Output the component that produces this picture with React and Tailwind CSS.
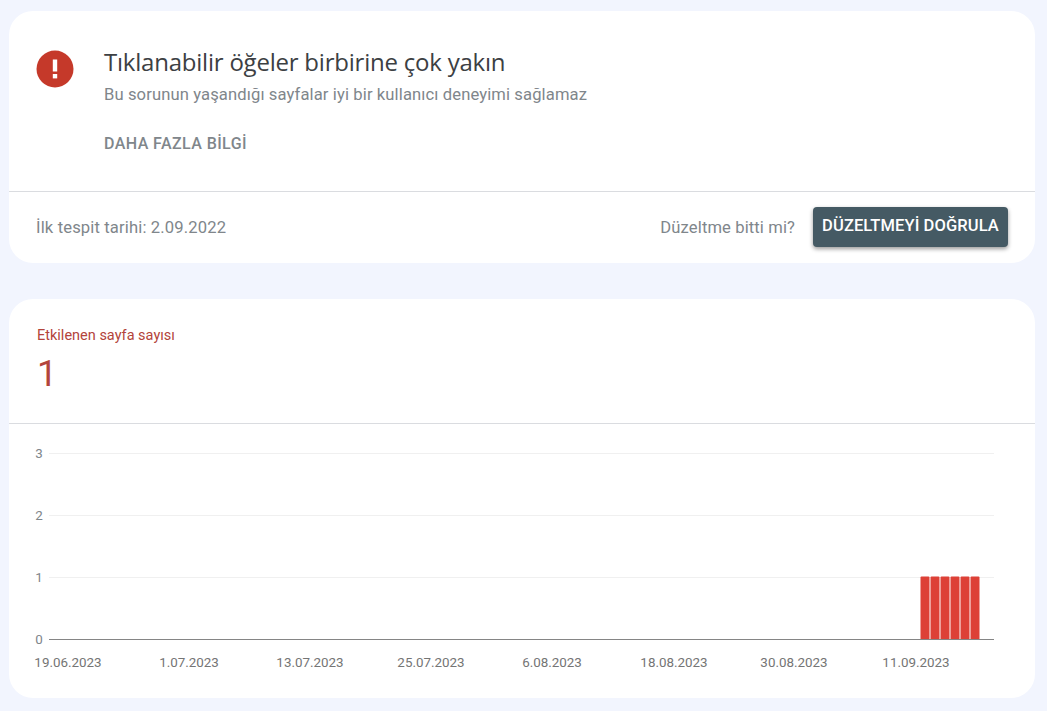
import React from 'react';

const yTicks = [
  { label: '3', y: 29 },
  { label: '2', y: 91 },
  { label: '1', y: 153 },
];

const xTicks = [
  { label: '19.06.2023', x: 59 },
  { label: '1.07.2023', x: 180 },
  { label: '13.07.2023', x: 301 },
  { label: '25.07.2023', x: 422 },
  { label: '6.08.2023', x: 543 },
  { label: '18.08.2023', x: 665 },
  { label: '30.08.2023', x: 785 },
  { label: '11.09.2023', x: 907 },
];

const bars = [911, 921, 931, 941, 951, 961];

const Chart = () => (
  <svg width="1026" height="273" className="block" style={{ fontFamily: 'Roboto, sans-serif' }}>
    {yTicks.map((t) => (
      <g key={t.label}>
        <line x1="40" x2="985" y1={t.y + 0.5} y2={t.y + 0.5} stroke="#f0f0f0" />
        <text x="30" y={t.y + 4.5} textAnchor="middle" fontSize="13.4" fill="#80868b">{t.label}</text>
      </g>
    ))}
    <text x="30" y="219.5" textAnchor="middle" fontSize="13.4" fill="#80868b">0</text>
    {bars.map((x) => (
      <path key={x} d={`M${x + 0.5} 215V153.5q0-1 1-1h7q1 0 1 1V215z`} fill="#dd4036" />
    ))}
    <line x1="40" x2="985" y1="215.5" y2="215.5" stroke="#858585" />
    {xTicks.map((t) => (
      <text key={t.label} x={t.x} y="243" textAnchor="middle" fontSize="13.4" fill="#757575">{t.label}</text>
    ))}
  </svg>
);

const App = () => (
  <div className="w-[1047px] h-[711px] overflow-hidden bg-[#f2f5fe] pt-[11px] pl-[9px] pr-3 font-['Roboto',sans-serif]">
    <div className="bg-white rounded-[24px] h-[252px] flex flex-col">
      <div className="h-[180px] flex border-b border-[#dadce0] box-content">
        <div className="pl-[27px] pt-[39px] w-[95px] shrink-0">
          <svg width="38" height="38" viewBox="0 0 38 38" className="block">
            <circle cx="19" cy="19" r="18.5" fill="#c5392a" />
            <rect x="16.8" y="9.5" width="4.4" height="12" fill="#fff" />
            <rect x="16.8" y="24" width="4.4" height="4.4" fill="#fff" />
          </svg>
        </div>
        <div className="pt-[35px]">
          <h1 className="text-[24px] leading-[32px] text-[#3c4043] font-['Open_Sans',sans-serif] tracking-[-0.22px]">Tıklanabilir öğeler birbirine çok yakın</h1>
          <p className="text-[16.6px] leading-[24px] text-[#80868b] mt-[5px] tracking-[0.11px]">Bu sorunun yaşandığı sayfalar iyi bir kullanıcı deneyimi sağlamaz</p>
          <a className="block mt-[27px] text-[16px] leading-[20px] font-medium text-[#80868b] tracking-[0.42px]">DAHA FAZLA BİLGİ</a>
        </div>
      </div>
      <div className="flex-1 flex items-center justify-between pl-[27px] pr-[27px]">
        <span className="text-[16.6px] text-[#80868b] tracking-[0.14px] mt-[1px]">İlk tespit tarihi: 2.09.2022</span>
        <div className="flex items-center gap-[18px] -mt-[2px]">
          <span className="text-[16.6px] text-[#80868b] tracking-[0.11px] mt-[3px]">Düzeltme bitti mi?</span>
          <button className="h-[40px] w-[195px] rounded-[4px] bg-[#455a64] text-white text-[16.5px] font-medium tracking-[0.1px] shadow-[0_2px_4px_rgba(0,0,0,0.4)]">DÜZELTMEYİ DOĞRULA</button>
        </div>
      </div>
    </div>

    <div className="bg-white rounded-[24px] h-[399px] mt-[36px] flex flex-col">
      <div className="h-[125px] border-b border-[#dadce0] pl-[28px] pt-[28px]">
        <div className="text-[14.5px] leading-[18px] text-[#b3443b]">Etkilenen sayfa sayısı</div>
        <div className="text-[36px] leading-[44px] text-[#b3443b] mt-[7px]">1</div>
      </div>
      <Chart />
    </div>
  </div>
);

export default App;
